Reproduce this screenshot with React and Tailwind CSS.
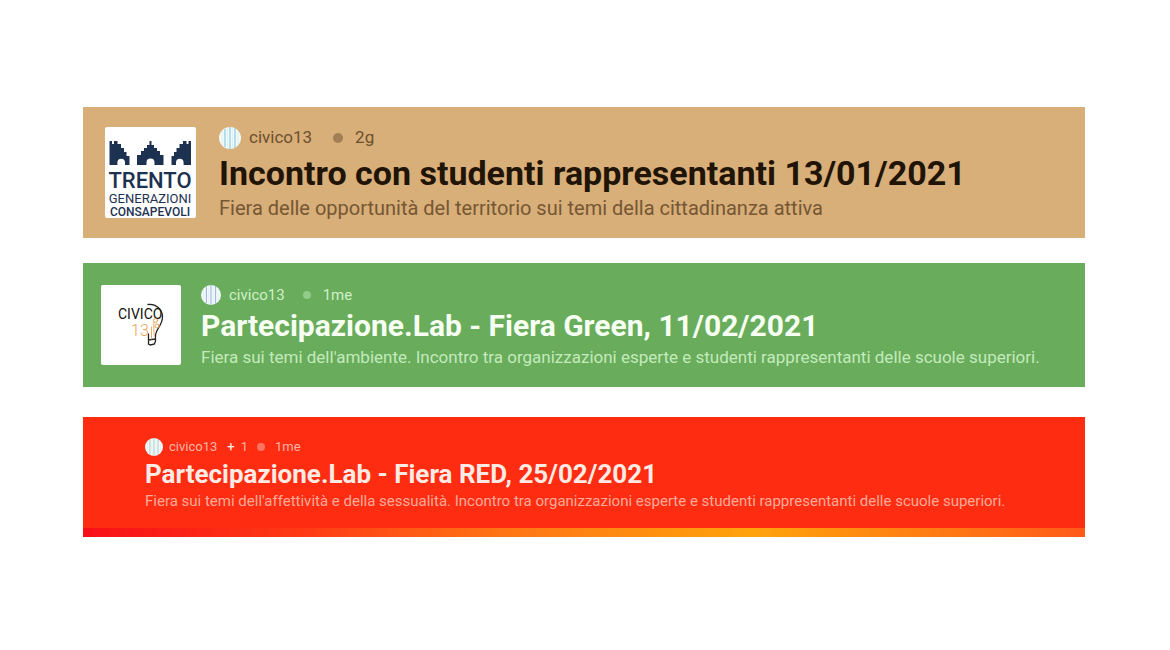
import React from "react";
import clsx from "clsx";

// Small round profile picture: pale disc with thin vertical bars.
function Avatar({ className, line }) {
  return (
    <svg viewBox="0 0 22 22" className={clsx("shrink-0", className)} aria-hidden="true">
      <circle cx="11" cy="11" r="11" fill="#f1faf8" />
      <path d="M6 2v18M11 0v22M16 1v20" stroke={line} strokeWidth="1.200" opacity="0.8" />
      <path d="M3 4v14M8.500 1v20M13.500 1v20M19 4v14" stroke="#dcecee" strokeWidth="0.800" />
    </svg>
  );
}

function TrentoLogo() {
  return (
    <svg viewBox="0 0 91 91" className="h-[91px] w-[91px] shrink-0 rounded-xs bg-white" role="img">
      <title>Trento Generazioni Consapevoli</title>
      <g fill="#1d3150">
        <path d="M4.500 14H7v3h2v-3h3.500v3H16v4h3v4h2.500v4h3v9H20v-2.500a3.800 3.800 0 0 0-7.600 0V38H4.500z" />
        <path d="M32 38V28h4v-4h3v-3h3v-3h2.500v-4h2v4H49v3h3v3h3v4h3.500v10h-9v-2.500a4 4 0 0 0-8 0V38z" />
        <path d="M86 14h-2.500v3h-2v-3H78v3h-3.500v4h-3v4H69v4h-2.500v9H71v-2.500a3.800 3.800 0 0 1 7.600 0V38H86z" />
      </g>
      <g fill="#1d3150" textAnchor="middle" className="font-[Roboto,sans-serif]">
        <text x="45" y="61" fontSize="22" fontWeight="500">TRENTO</text>
        <text x="45" y="76" fontSize="13">GENERAZIONI</text>
        <text x="45" y="89" fontSize="12" fontWeight="500">CONSAPEVOLI</text>
      </g>
    </svg>
  );
}

function CivicoLogo() {
  return (
    <svg viewBox="0 0 80 80" className="h-20 w-20 shrink-0 rounded-xs bg-white" role="img">
      <title>Civico 13</title>
      <text x="17" y="34" fontSize="14" fill="#111" className="font-[Roboto,sans-serif]">
        CIVICO
      </text>
      <g fill="none" strokeLinecap="round">
        <path d="M47 19.500c8-1 14.500 5 14.500 12.500 0 8-6 11-7 18v6l-1 3-4 1-2-1v-5M47.500 49v6l7-1" stroke="#222" strokeWidth="1.300" />
        <path d="M50.500 54V42M53.500 51c-1-5-1-10-.5-14" stroke="#e9a35a" strokeWidth="0.900" />
        <circle cx="54.500" cy="35.500" r="2" stroke="#e9a35a" />
        <circle cx="56" cy="41" r="2" stroke="#e9a35a" />
      </g>
      <text x="30" y="51" fontSize="16" fill="#e9a35a" className="font-[Roboto,sans-serif] font-light">
        13
      </text>
    </svg>
  );
}

function Meta({ author, others, age, className, avatar, line, dot }) {
  return (
    <div className={clsx("flex items-center", className)}>
      <Avatar className={avatar} line={line} />
      <span>{author}</span>
      {others && (
        <span className="ml-[10px] flex gap-[6px]">
          <span className="text-white">+</span>
          <span>{others}</span>
        </span>
      )}
      <span className={clsx("rounded-full", dot)} />
      <span>{age}</span>
    </div>
  );
}

export default function App() {
  return (
    <main className="min-h-screen bg-white pt-[107px] pr-[85px] pl-[83px] font-[Roboto,sans-serif] whitespace-nowrap">
      <article className="flex gap-[23px] bg-[#d8ae79] px-[22px] pt-5 pb-5">
        <TrentoLogo />
        <div className="-mb-1">
          <Meta
            author="civico13"
            age="2g"
            className="h-[22px] text-[17px] text-[#6c502e]"
            avatar="mr-2 h-[22px] w-[22px]"
            line="#79bfe0"
            dot="mr-3 ml-[21px] h-[10px] w-[10px] bg-[#a27f55]"
          />
          <h2 className="text-[34px] leading-[48px] font-bold text-[#1f1406]">
            Incontro con studenti rappresentanti 13/01/2021
          </h2>
          <p className="text-[20px] leading-[22px] text-[#755733]">
            Fiera delle opportunità del territorio sui temi della cittadinanza attiva
          </p>
        </div>
      </article>

      <article className="mt-[25px] flex gap-5 bg-[#68ac5c] px-[18px] pt-[22px] pb-[22px]">
        <CivicoLogo />
        <div className="-mb-1">
          <Meta
            author="civico13"
            age="1me"
            className="h-5 text-[15px] text-[#d0f0c8]"
            avatar="mr-2 h-5 w-5"
            line="#8fa6e0"
            dot="mr-3 ml-[18px] h-2 w-2 bg-[#93cb89]"
          />
          <h2 className="text-[30px] leading-[42px] font-bold text-[#f6fff2]">
            Partecipazione.Lab - Fiera Green, 11/02/2021
          </h2>
          <p className="text-[17px] leading-5 text-[#c4eabb]">
            Fiera sui temi dell'ambiente. Incontro tra organizzazioni esperte e studenti rappresentanti delle scuole superiori.
          </p>
        </div>
      </article>

      <article className="mt-[30px] bg-[#fe2d12]">
        <div className="px-[62px] pt-[21px] pb-[18px]">
          <Meta
            author="civico13"
            others="1"
            age="1me"
            className="h-[18px] text-[13px] text-[#ffb5a6]"
            avatar="mr-[6px] h-[18px] w-[18px]"
            line="#a5bfc6"
            dot="mr-[10px] ml-[9px] h-2 w-2 bg-[#ff7460]"
          />
          <h2 className="text-[26px] leading-9 font-bold text-[#ffeae4]">
            Partecipazione.Lab - Fiera RED, 25/02/2021
          </h2>
          <p className="text-[15px] leading-[18px] text-[#ffaa98]">
            Fiera sui temi dell'affettività e della sessualità. Incontro tra organizzazioni esperte e studenti rappresentanti delle scuole superiori.
          </p>
        </div>
        <div className="h-[9px] bg-[linear-gradient(90deg,#f80f18,#fe3a14_22%,#ff7414_42%,#ffa30c_67%,#ff5a18)]" />
      </article>
    </main>
  );
}
